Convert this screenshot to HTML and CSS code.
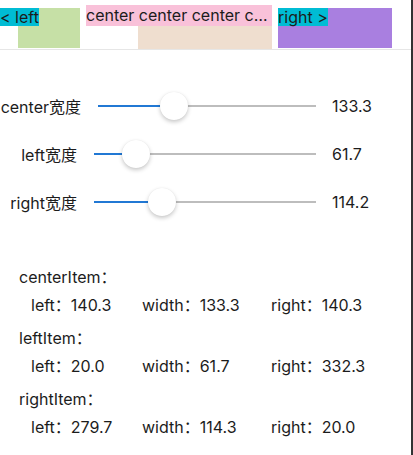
FILE: index.html
```html
<!DOCTYPE html>
<html lang="zh-CN">
<head>
    <meta charset="UTF-8">
    <meta name="viewport" content="width=device-width, initial-scale=1.0">
    <title>导航栏布局</title>
    <link rel="stylesheet" href="styles.css">
</head>
<body>
    <div class="screen">
        <header class="nav">
            <div class="nav-lead">
                <div class="box box-green"></div>
                <span class="tag tag-cyan">&lt; left</span>
            </div>
            <div class="nav-mid">
                <span class="tag tag-pink">center center center center center center</span>
                <div class="box box-beige"></div>
            </div>
            <div class="nav-trail">
                <div class="box box-purple"></div>
                <span class="tag tag-cyan">right &gt;</span>
            </div>
        </header>

        <section class="sliders">
            <div class="slider-row row-wide">
                <span class="slider-label">center宽度</span>
                <div class="slider">
                    <div class="slider-fill" style="width: 34.9%"></div>
                    <div class="slider-thumb" style="left: 34.9%"></div>
                </div>
                <span class="slider-value">133.3</span>
            </div>
            <div class="slider-row">
                <span class="slider-label">left宽度</span>
                <div class="slider">
                    <div class="slider-fill" style="width: 18.9%"></div>
                    <div class="slider-thumb" style="left: 18.9%"></div>
                </div>
                <span class="slider-value">61.7</span>
            </div>
            <div class="slider-row">
                <span class="slider-label">right宽度</span>
                <div class="slider">
                    <div class="slider-fill" style="width: 30.6%"></div>
                    <div class="slider-thumb" style="left: 30.6%"></div>
                </div>
                <span class="slider-value">114.2</span>
            </div>
        </section>

        <section class="info">
            <div class="info-group">
                <div class="info-title">centerItem：</div>
                <div class="info-line">
                    <span>left：140.3</span>
                    <span>width：133.3</span>
                    <span>right：140.3</span>
                </div>
            </div>
            <div class="info-group">
                <div class="info-title">leftItem：</div>
                <div class="info-line">
                    <span>left：20.0</span>
                    <span>width：61.7</span>
                    <span>right：332.3</span>
                </div>
            </div>
            <div class="info-group">
                <div class="info-title">rightItem：</div>
                <div class="info-line">
                    <span>left：279.7</span>
                    <span>width：114.3</span>
                    <span>right：20.0</span>
                </div>
            </div>
        </section>
    </div>
</body>
</html>
```

FILE: styles.css
```css
html, body {
    margin: 0;
    padding: 0;
}
body {
    font-family: Inter, "Noto Sans CJK SC", sans-serif;
    font-size: 16px;
    color: #1c1c1c;
    background-color: #fff;
}
.screen {
    width: 413px;
    height: 455px;
    box-sizing: border-box;
    border-right: 2px solid #333;
    overflow: hidden;
}

/* 顶部导航栏 */
.nav {
    display: flex;
    height: 49px;
    border-bottom: 1px solid #e6e6e6;
}
.nav-lead, .nav-trail {
    display: grid;
}
.nav-lead > *, .nav-trail > * {
    grid-area: 1 / 1;
}
.nav-lead {
    width: 80px;
}
.nav-mid {
    width: 186px;
    margin-left: 6px;
    display: flex;
    flex-direction: column;
}
.nav-trail {
    width: 114px;
    margin-left: 6px;
}
.box {
    margin-top: 8px;
    height: 40px;
}
.box-green {
    margin-left: 18px;
    width: 62px;
    background-color: #c6e0a6;
}
.box-beige {
    margin-top: 0;
    height: 23px;
    width: 134px;
    align-self: flex-end;
    background-color: #efdecf;
}
.box-purple {
    background-color: #a97fe0;
}
.tag {
    justify-self: start;
    align-self: start;
    white-space: nowrap;
}
.tag-cyan {
    margin-top: 8px;
    line-height: 18px;
    background-color: #00bcd4;
}
.tag-pink {
    align-self: stretch;
    margin-top: 5px;
    line-height: 21px;
    overflow: hidden;
    text-overflow: ellipsis;
    background-color: #f9c1d9;
}

/* 滑块 */
.sliders {
    padding-top: 32px;
}
.slider-row {
    display: flex;
    align-items: center;
    height: 48px;
}
.slider-label {
    flex: none;
    width: 77px;
    display: flex;
    justify-content: flex-end;
    white-space: nowrap;
}
.row-wide .slider-label {
    width: 81px;
}
.slider {
    flex: 1;
    position: relative;
    height: 28px;
    margin: 0 16px 0 17px;
}
.slider::before {
    content: "";
    position: absolute;
    left: 0;
    right: 0;
    top: 13px;
    height: 2px;
    background-color: #bdbdbd;
}
.slider-fill {
    position: absolute;
    left: 0;
    top: 13px;
    height: 2px;
    background-color: #2178d4;
}
.slider-thumb {
    position: absolute;
    top: 0;
    width: 28px;
    height: 28px;
    margin-left: -14px;
    border-radius: 50%;
    background-color: #fff;
    box-shadow: 0 2px 4px rgba(0,0,0,0.22), 0 0 1px rgba(0,0,0,0.08);
}
.slider-value {
    flex: none;
    width: 79px;
}

/* 位置信息 */
.info {
    margin-top: 37px;
    padding-left: 19px;
    line-height: 28px;
}
.info-group {
    margin-bottom: 5px;
}
.info-line {
    display: grid;
    grid-template-columns: 111px 129px auto;
    padding-left: 12px;
}
```
